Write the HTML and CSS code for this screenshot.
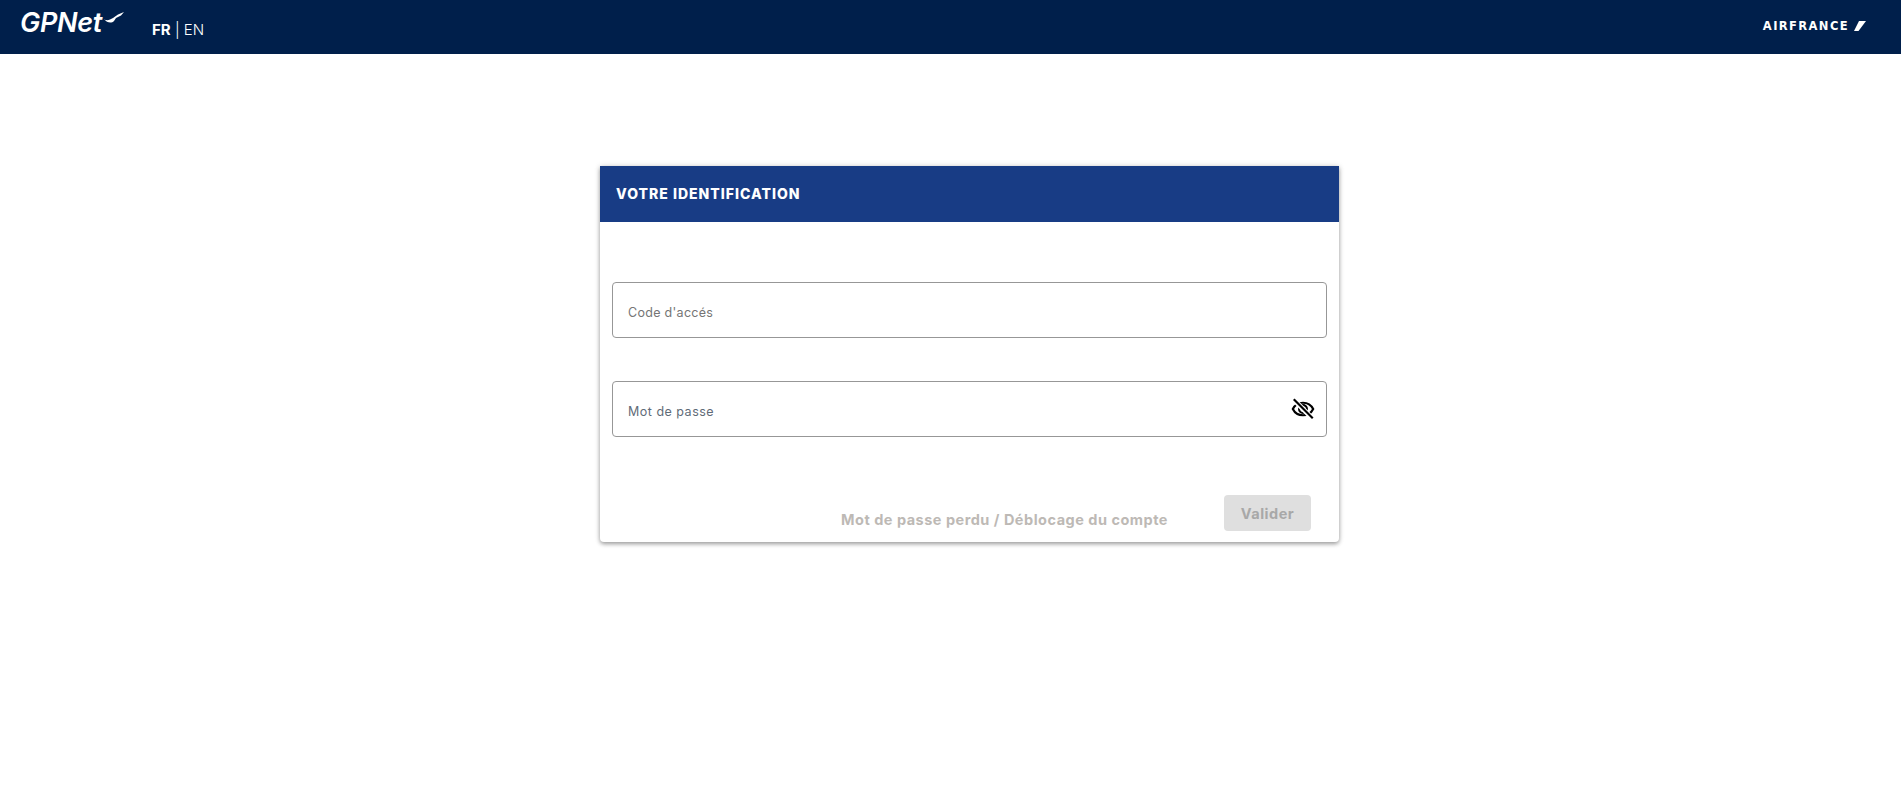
FILE: index.html
```html
<!DOCTYPE html>
<html lang="fr">
<head>
  <meta charset="UTF-8">
  <meta name="viewport" content="width=device-width, initial-scale=1.0">
  <title>GPNet</title>
  <link rel="stylesheet" href="styles.css">
</head>
<body>

  <header class="topbar">
    <div class="topbar-left">
      <div class="brand">
        <span class="brand-name">GPNet</span>
        <svg class="brand-wing" viewBox="0 0 20 12" width="20" height="12">
          <path d="M0 7 C1.5 8.5 4 8.5 6 7.5 L9 6 L14 2.5 L20 0 L17 3.5 L12 6 L10 9 C7.5 11.5 3 11 0 7 Z" fill="#fff"/>
        </svg>
      </div>
      <div class="lang"><b>FR</b> | EN</div>
    </div>
    <div class="airline">
      <span>AIRFRANCE</span>
      <svg viewBox="0 0 12 10" width="12" height="10">
        <path d="M5 0 H12 L4.5 10 H0 Z" fill="#fff"/>
      </svg>
    </div>
  </header>

  <main class="page">
    <section class="card">
      <h1 class="card-title">VOTRE IDENTIFICATION</h1>
      <form class="card-body">
        <div class="field">
          <label class="field-label" for="code">Code d'accés</label>
          <input class="field-input" id="code" type="text">
        </div>
        <div class="field">
          <label class="field-label field-label-blue" for="password">Mot de passe</label>
          <input class="field-input" id="password" type="password">
          <svg class="eye" viewBox="0 0 24 24" width="26" height="26">
            <path d="M2.6 12 C4.4 8.4 8 6.2 12 6.2 C16 6.2 19.6 8.4 21.4 12 C19.6 15.6 16 17.8 12 17.8 C8 17.8 4.4 15.6 2.6 12 Z" fill="none" stroke="#000" stroke-width="2"/>
            <circle cx="12" cy="12" r="3.6" fill="none" stroke="#000" stroke-width="2"/>
            <path d="M3.5 3.5 L20.5 20.5" stroke="#fff" stroke-width="4.5"/>
            <path d="M3.5 3 L21 20.5" stroke="#000" stroke-width="2"/>
          </svg>
        </div>
        <div class="actions">
          <a class="lost-link">Mot de passe perdu / Déblocage du compte</a>
          <button class="submit" type="button" disabled>Valider</button>
        </div>
      </form>
    </section>
  </main>

</body>
</html>
```

FILE: styles.css
```css
* {
  box-sizing: border-box;
}
body {
  font-family: Inter, "Open Sans", sans-serif;
  background-color: #fff;
  margin: 0;
  height: 794px;
  overflow: hidden;
}
.topbar {
  display: flex;
  justify-content: space-between;
  align-items: center;
  height: 54px;
  padding: 0 35px 0 20px;
  background-color: #001f4b;
  color: #fff;
}
.topbar-left {
  display: flex;
  align-items: center;
}
.brand {
  display: flex;
  align-items: flex-start;
  width: 132px;
  height: 34px;
}
.brand-name {
  font-size: 27px;
  font-style: italic;
  font-weight: 600;
  line-height: 34px;
  letter-spacing: -0.3px;
  margin-top: -4px;
}
.brand-wing {
  margin: 2px 0 0 2px;
}
.lang {
  font-size: 15px;
  font-weight: 300;
  padding-top: 4px;
}
.lang b {
  font-weight: 700;
}
.airline {
  display: flex;
  align-items: center;
  gap: 5px;
  font-family: "DejaVu Sans", sans-serif;
  font-size: 11.5px;
  font-weight: 700;
  letter-spacing: 1.4px;
  margin-top: -2px;
}
.page {
  display: flex;
  justify-content: center;
  padding-top: 112px;
  padding-left: 38px;
}
.card {
  width: 739px;
  height: 376px;
  background: #fff;
  border-radius: 0 0 4px 4px;
  box-shadow: 0 2px 4px rgba(0, 0, 0, 0.35), 0 0 6px rgba(0, 0, 0, 0.12);
}
.card-title {
  margin: 0;
  height: 56px;
  padding-left: 16px;
  background-color: #183c85;
  color: #fff;
  font-size: 14px;
  font-weight: 800;
  letter-spacing: 1px;
  line-height: 56px;
}
.card-body {
  padding: 60px 12px 0 12px;
}
.field {
  position: relative;
  margin-bottom: 43px;
}
.field-input {
  display: block;
  width: 100%;
  height: 56px;
  border: 1px solid #979797;
  border-radius: 4px;
  background: #fff;
}
.field-label {
  position: absolute;
  left: 16px;
  top: 23px;
  font-size: 12.5px;
  letter-spacing: 0.3px;
  color: #757575;
}
.field-label-blue {
  color: #5f6b78;
  letter-spacing: 0.5px;
}
.eye {
  position: absolute;
  right: 11px;
  top: 15px;
}
.actions {
  display: flex;
  justify-content: flex-end;
  align-items: flex-start;
  margin-top: 58px;
  padding-right: 16px;
}
.lost-link {
  margin: 16px 56px 0 0;
  font-size: 14.5px;
  font-weight: 700;
  letter-spacing: 0.5px;
  color: #bdb9b5;
}
.submit {
  width: 87px;
  height: 36px;
  border: none;
  border-radius: 4px;
  background-color: #dfdfdf;
  color: #a8a8a8;
  font-family: inherit;
  font-size: 14.5px;
  font-weight: 700;
  letter-spacing: 0.5px;
}
```
